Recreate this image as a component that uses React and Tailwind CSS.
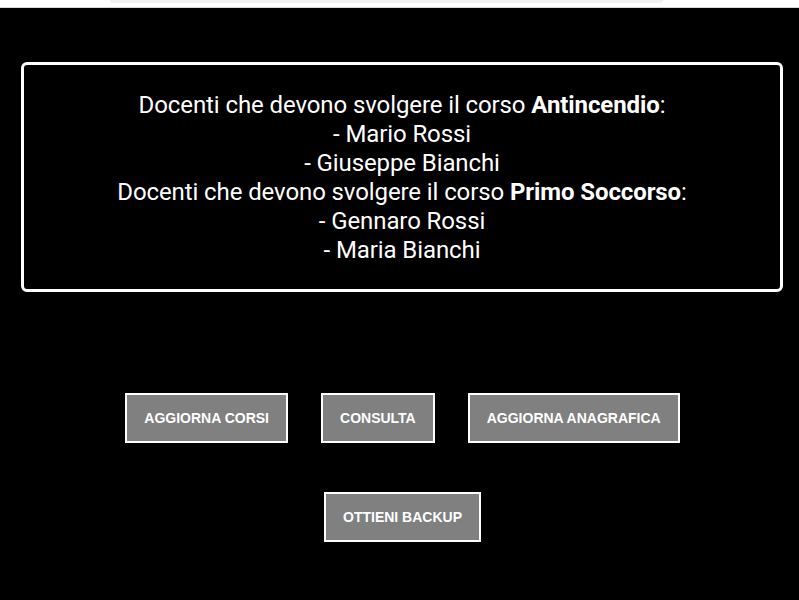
export default function App() {
  const buttons = ['Aggiorna corsi', 'Consulta', 'Aggiorna anagrafica']

  return (
    <div className="min-h-[600px] bg-black" style={{ fontFamily: 'Roboto, sans-serif' }}>
      {/* top strip */}
      <div className="h-[8px] bg-white border-b border-[#d6d6d6] relative">
        <div className="absolute left-[110px] top-0 w-[553px] h-[3px] bg-[#eff1f4] rounded-b-full" />
      </div>

      <div className="pt-[54px] pl-[21px] pr-[16px]">
        <div className="border-[3px] border-white rounded-[6px] pt-[26px] pb-[24px] text-center text-white text-[24px] leading-[29px] tracking-[-0.1px]">
          <div>Docenti che devono svolgere il corso <b className="font-bold">Antincendio</b>:</div>
          <div>- Mario Rossi</div>
          <div>- Giuseppe Bianchi</div>
          <div>Docenti che devono svolgere il corso <b className="font-bold">Primo Soccorso</b>:</div>
          <div>- Gennaro Rossi</div>
          <div>- Maria Bianchi</div>
        </div>
      </div>

      <div className="flex flex-col items-center gap-[49px] pt-[101px] pl-[6px]">
        <div className="flex gap-[33px]">
          {buttons.map((b) => (
            <Btn key={b} label={b} />
          ))}
        </div>
        <Btn label="Ottieni backup" />
      </div>
    </div>
  )
}

function Btn({ label }) {
  return (
    <button
      className="h-[50px] px-[17px] bg-[#808080] border-2 border-white text-white uppercase font-bold text-[14px]"
      style={{ fontFamily: '"Liberation Sans", Arial, sans-serif' }}
    >
      {label}
    </button>
  )
}
